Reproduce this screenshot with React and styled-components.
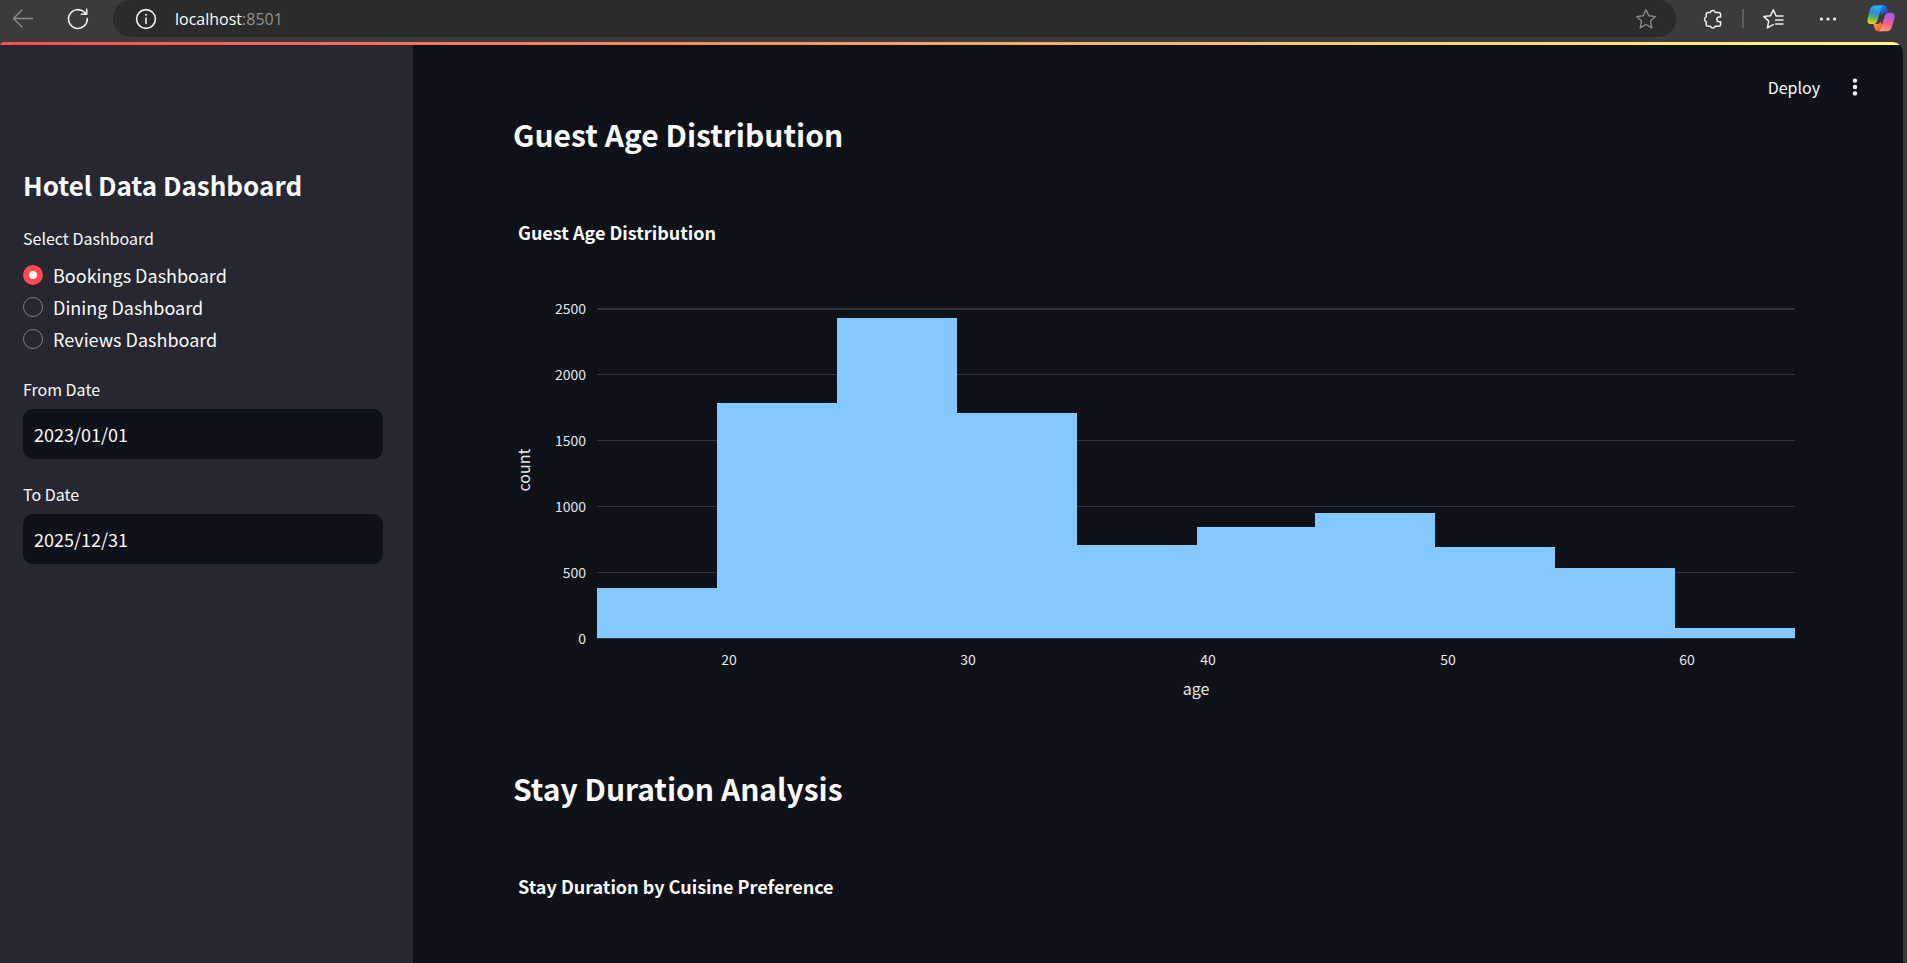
import React, { useState } from 'react';
import styled, { createGlobalStyle, css } from 'styled-components';

const colors = {
  chrome: '#3b3b3b',
  pill: '#2b2b2b',
  page: '#0e1117',
  sidebar: '#262730',
  text: '#fafafa',
  primary: '#ff4b4b',
  bar: '#83c9ff',
};

const GlobalStyle = createGlobalStyle`
  *, *::before, *::after { box-sizing: border-box; }
  body {
    margin: 0;
    background: ${colors.chrome};
    color: ${colors.text};
    font-family: "Noto Sans CJK SC", "Noto Sans", sans-serif;
  }
  button, input { font: inherit; color: inherit; }
`;

const Window = styled.div`
  display: flex;
  flex-direction: column;
  min-height: 100vh;
`;

/* Browser bar */
const BrowserBar = styled.header`
  display: flex;
  align-items: flex-start;
  height: 42px;
  padding: 0 12px 0 8px;
`;

const IconButton = styled.button`
  display: flex;
  align-items: center;
  justify-content: center;
  flex: none;
  width: ${(p) => p.$width || 30}px;
  height: 37px;
  padding: 0;
  border: 0;
  background: none;
  color: ${(p) => (p.$dim ? '#8b8b8b' : '#f0f0f0')};
`;

const NavButtons = styled.nav`
  display: flex;
  gap: 25px;
  margin-right: 20px;
`;

const AddressPill = styled.div`
  display: flex;
  align-items: center;
  flex: 1;
  height: 37px;
  padding: 0 15px 0 18px;
  border-radius: 18px;
  background: ${colors.pill};
`;

const Address = styled.div`
  flex: 1;
  padding-left: 14px;
  color: #fff;
  font-family: "Open Sans", "Noto Sans", sans-serif;
  font-size: 16px;
  line-height: 36px;
  span { color: #929292; }
`;

const BrowserTools = styled.div`
  display: flex;
  align-items: center;
  padding-left: 21px;
`;

const Divider = styled.span`
  width: 2px;
  height: 19px;
  margin: 0 15px;
  background: #5e5e5e;
`;

/* Page */
const Page = styled.div`
  display: flex;
  flex-direction: column;
  flex: 1;
  margin-right: 4px;
  border-radius: 4px 10px 0 0;
  overflow: hidden;
  background: ${colors.page};
`;

const Decoration = styled.div`
  height: 3px;
  background: linear-gradient(90deg, #ff4b4b, #fffd80);
`;

const Columns = styled.div`
  display: flex;
  flex: 1;
`;

const Sidebar = styled.aside`
  flex: none;
  width: 413px;
  padding: 120px 30px 40px 23px;
  background: ${colors.sidebar};
`;

const SidebarTitle = styled.h1`
  margin: 0 0 18px;
  font-size: 26px;
  font-weight: 700;
  line-height: 40px;
`;

const labelText = css`
  display: block;
  padding: 0;
  font-size: 16px;
  line-height: 30px;
`;

const RadioGroup = styled.fieldset`
  margin: 0 0 19px;
  padding: 0;
  border: 0;
`;

const Legend = styled.legend`
  ${labelText}
  margin-bottom: 6px;
`;

const RadioLabel = styled.label`
  display: flex;
  align-items: center;
  gap: 10px;
  height: 32px;
  font-size: 18px;
  line-height: 32px;
`;

const Radio = styled.input`
  appearance: none;
  width: 20px;
  height: 20px;
  margin: 0;
  border: 1px solid #7c7d84;
  border-radius: 50%;
  &:checked {
    border: 6px solid ${colors.primary};
    background: ${colors.text};
  }
`;

const Field = styled.div`
  margin-bottom: 20px;
`;

const FieldLabel = styled.label`
  ${labelText}
  margin-bottom: 5px;
`;

const DateInput = styled.input`
  display: block;
  width: 100%;
  height: 50px;
  padding: 0 11px;
  border: 0;
  border-radius: 10px;
  background: ${colors.page};
  font-size: 18px;
  line-height: 50px;
`;

const Main = styled.main`
  flex: 1;
  min-width: 0;
`;

const Toolbar = styled.div`
  display: flex;
  align-items: center;
  justify-content: flex-end;
  gap: 20px;
  height: 59px;
  padding: 25px 33px 0 0;
`;

const ToolbarButton = styled.button`
  display: flex;
  align-items: center;
  justify-content: center;
  min-width: 30px;
  height: 36px;
  padding: 0;
  border: 0;
  background: none;
  font-size: 16px;
  line-height: 36px;
`;

const Content = styled.div`
  display: flex;
  flex-direction: column;
  gap: 20px;
  padding: 0 100px;
`;

const Section = styled.section`
  display: flex;
  flex-direction: column;
  gap: 20px;
`;

const SectionTitle = styled.h2`
  margin: 0;
  font-size: 30px;
  font-weight: 700;
  line-height: 60px;
`;

const Figure = styled.figure`
  margin: 0;
  padding: 33px 0 0;
  min-height: ${(p) => (p.$empty ? 0 : 554)}px;
`;

const ChartTitle = styled.figcaption`
  padding-left: 5px;
  font-size: 18px;
  font-weight: 700;
  line-height: 30px;
`;

const ChartSvg = styled.svg`
  display: block;
  width: 100%;
  margin-top: 33px;
  overflow: visible;
`;

const TickText = styled.text`
  fill: #e6e6ea;
  font-size: 14px;
`;

const AxisText = styled.text`
  fill: #e6e6ea;
  font-size: 16px;
`;

const PLOT = { left: 84, right: 1282, bottom: 358, step: 66 };
const ageBins = [380, 1782, 2426, 1706, 706, 842, 948, 690, 530, 78];
const yTicks = [0, 500, 1000, 1500, 2000, 2500];
const xTicks = [20, 30, 40, 50, 60];
const yFor = (v) => Math.round(PLOT.bottom - (v / 500) * PLOT.step);
const xFor = (age) => PLOT.left + ((age - 14.5) / 50) * (PLOT.right - PLOT.left);
const binEdge = (i) => Math.round(xFor(14.5 + i * 5) / 2) * 2;

function AgeHistogram() {
  return (
    <ChartSvg viewBox="0 0 1290 440" role="img" aria-label="Guest age histogram">
      {yTicks.map((v) => (
        <g key={v}>
          <rect
            x={PLOT.left}
            y={yFor(v)}
            width={PLOT.right - PLOT.left}
            height={v === 2500 ? 2 : 1}
            fill="#31333f"
          />
          <TickText x="73" y={yFor(v) + 6} textAnchor="end">{v}</TickText>
        </g>
      ))}
      {ageBins.map((v, i) => (
        <rect
          key={i}
          x={binEdge(i)}
          y={yFor(v)}
          width={binEdge(i + 1) - binEdge(i)}
          height={PLOT.bottom - yFor(v)}
          fill={colors.bar}
        />
      ))}
      {xTicks.map((v) => (
        <TickText key={v} x={Math.round(xFor(v))} y="385" textAnchor="middle">{v}</TickText>
      ))}
      <AxisText x="683" y="415" textAnchor="middle">age</AxisText>
      <AxisText transform="translate(17 190) rotate(-90)" textAnchor="middle">count</AxisText>
    </ChartSvg>
  );
}

const Stroke = ({ size = 22, children, w = 1.4 }) => (
  <svg width={size} height={size} viewBox="0 0 22 22" fill="none" stroke="currentColor" strokeWidth={w} strokeLinecap="round" strokeLinejoin="round" aria-hidden="true">
    {children}
  </svg>
);

const BackIcon = () => (
  <Stroke><path d="M20.5 10.5H1.5M10 2L1.5 10.5L10 19" /></Stroke>
);
const ReloadIcon = () => (
  <Stroke w={1.6}><path d="M20.3 10.5A9.4 9.4 0 1 1 17.4 4.2L19.6 6.2M19.7 1.4V6.3H14.3" /></Stroke>
);
const InfoIcon = () => (
  <Stroke w={1.6}>
    <circle cx="11" cy="11" r="9.4" />
    <path d="M11 10V15.5" />
    <circle cx="11" cy="6.8" r="0.7" fill="currentColor" strokeWidth="0.6" />
  </Stroke>
);
const StarIcon = () => (
  <Stroke><path d="M11 1.8L13.8 7.8L20.4 8.6L15.5 13.1L16.8 19.8L11 16.5L5.2 19.8L6.5 13.1L1.6 8.6L8.2 7.8Z" /></Stroke>
);
const PuzzleIcon = () => (
  <Stroke w={1.5}>
    <path d="M9.4 4.4A2.5 2.5 0 0 1 14.2 4.4H17.6A2 2 0 0 1 19.6 6.4V8.9H18.2A2.4 2.4 0 0 0 18.2 13.7H19.6V16.2A2 2 0 0 1 17.6 18.2H14.2A2.5 2.5 0 0 1 9.4 18.2H7.2A2 2 0 0 1 5.2 16.2V13.6A2.5 2.5 0 0 1 5.2 8.9V6.4A2 2 0 0 1 7.2 4.4Z" />
  </Stroke>
);
const FavoritesIcon = () => (
  <Stroke w={1.5}>
    <path d="M20 8H13.1L10.3 1.8L7.4 7.8L.9 8.6L5.7 13.1L4.4 19.8L10.2 16.6M12.6 12H20M12.6 16H20" />
  </Stroke>
);
const DotsIcon = () => (
  <svg width="20" height="20" viewBox="0 0 20 20" fill="currentColor" aria-hidden="true">
    <circle cx="3.4" cy="10" r="1.6" /><circle cx="10" cy="10" r="1.6" /><circle cx="16.6" cy="10" r="1.6" />
  </svg>
);
const KebabIcon = () => (
  <svg width="20" height="20" viewBox="0 0 20 20" fill="currentColor" aria-hidden="true">
    <circle cx="10" cy="3.6" r="2.2" /><circle cx="10" cy="10" r="2.2" /><circle cx="10" cy="16.4" r="2.2" />
  </svg>
);
const CopilotIcon = () => (
  <svg width="28" height="27" viewBox="0 0 28 27" aria-hidden="true">
    <defs>
      <linearGradient id="cpBlue" x1="0.6" y1="0" x2="0.4" y2="1">
        <stop offset="0" stopColor="#2bb5f5" /><stop offset="0.4" stopColor="#2a8fdc" />
        <stop offset="0.7" stopColor="#5cb45f" /><stop offset="1" stopColor="#f5d518" />
      </linearGradient>
      <linearGradient id="cpPink" x1="0.6" y1="0" x2="0.3" y2="1">
        <stop offset="0" stopColor="#a45bee" /><stop offset="0.5" stopColor="#ee5a9a" /><stop offset="1" stopColor="#ffa257" />
      </linearGradient>
      <linearGradient id="cpNavy" x1="0" y1="0" x2="1" y2="1">
        <stop offset="0" stopColor="#1c8ee8" /><stop offset="1" stopColor="#1a3fc0" />
      </linearGradient>
      <linearGradient id="cpRed" x1="0" y1="0" x2="1" y2="1">
        <stop offset="0" stopColor="#ffb03a" /><stop offset="1" stopColor="#e8404c" />
      </linearGradient>
    </defs>
    <path d="M12 .5H17Q19.2 .5 20 3L21.4 7.8H17.5Q15.4 7.8 14.7 10L12 5Z" fill="url(#cpNavy)" />
    <path d="M16 26.3H11Q8.6 26.3 7.8 23.8L6.4 19H10.5Q12.7 19 13.4 16.8L16 21Z" fill="url(#cpRed)" />
    <path d="M8 .5H17Q14.8 .8 14 3.4L10.5 15.4Q9.4 19 6 19H3.8Q-.6 19 .7 13L3.2 4.2Q4.4 .5 8 .5Z" fill="url(#cpBlue)" />
    <path d="M20 26.3H11Q13.3 26 14 23.4L17.5 11.4Q18.6 7.8 22 7.8H24.2Q28.6 7.8 27.3 13.8L24.8 22.6Q23.6 26.3 20 26.3Z" fill="url(#cpPink)" />
  </svg>
);

const dashboards = ['Bookings Dashboard', 'Dining Dashboard', 'Reviews Dashboard'];

export default function App() {
  const [selected, setSelected] = useState(dashboards[0]);
  return (
    <Window>
      <GlobalStyle />
      <BrowserBar>
        <NavButtons>
          <IconButton $dim aria-label="Back"><BackIcon /></IconButton>
          <IconButton aria-label="Reload"><ReloadIcon /></IconButton>
        </NavButtons>
        <AddressPill>
          <IconButton aria-label="Site information"><InfoIcon /></IconButton>
          <Address>localhost<span>:8501</span></Address>
          <IconButton $dim aria-label="Add to favorites"><StarIcon /></IconButton>
        </AddressPill>
        <BrowserTools>
          <IconButton aria-label="Extensions"><PuzzleIcon /></IconButton>
          <Divider />
          <IconButton aria-label="Favorites"><FavoritesIcon /></IconButton>
          <IconButton $width={78} aria-label="More"><DotsIcon /></IconButton>
          <IconButton $width={28} aria-label="Copilot"><CopilotIcon /></IconButton>
        </BrowserTools>
      </BrowserBar>
      <Page>
        <Decoration />
        <Columns>
          <Sidebar>
            <SidebarTitle>Hotel Data Dashboard</SidebarTitle>
            <RadioGroup>
              <Legend>Select Dashboard</Legend>
              {dashboards.map((name) => (
                <RadioLabel key={name}>
                  <Radio
                    type="radio"
                    name="dashboard"
                    checked={selected === name}
                    onChange={() => setSelected(name)}
                  />
                  {name}
                </RadioLabel>
              ))}
            </RadioGroup>
            <Field>
              <FieldLabel htmlFor="from">From Date</FieldLabel>
              <DateInput id="from" type="text" defaultValue="2023/01/01" />
            </Field>
            <Field>
              <FieldLabel htmlFor="to">To Date</FieldLabel>
              <DateInput id="to" type="text" defaultValue="2025/12/31" />
            </Field>
          </Sidebar>
          <Main>
            <Toolbar>
              <ToolbarButton>Deploy</ToolbarButton>
              <ToolbarButton aria-label="Main menu"><KebabIcon /></ToolbarButton>
            </Toolbar>
            <Content>
              <Section>
                <SectionTitle>Guest Age Distribution</SectionTitle>
                <Figure>
                  <ChartTitle>Guest Age Distribution</ChartTitle>
                  <AgeHistogram />
                </Figure>
              </Section>
              <Section>
                <SectionTitle>Stay Duration Analysis</SectionTitle>
                <Figure $empty>
                  <ChartTitle>Stay Duration by Cuisine Preference</ChartTitle>
                </Figure>
              </Section>
            </Content>
          </Main>
        </Columns>
      </Page>
    </Window>
  );
}
